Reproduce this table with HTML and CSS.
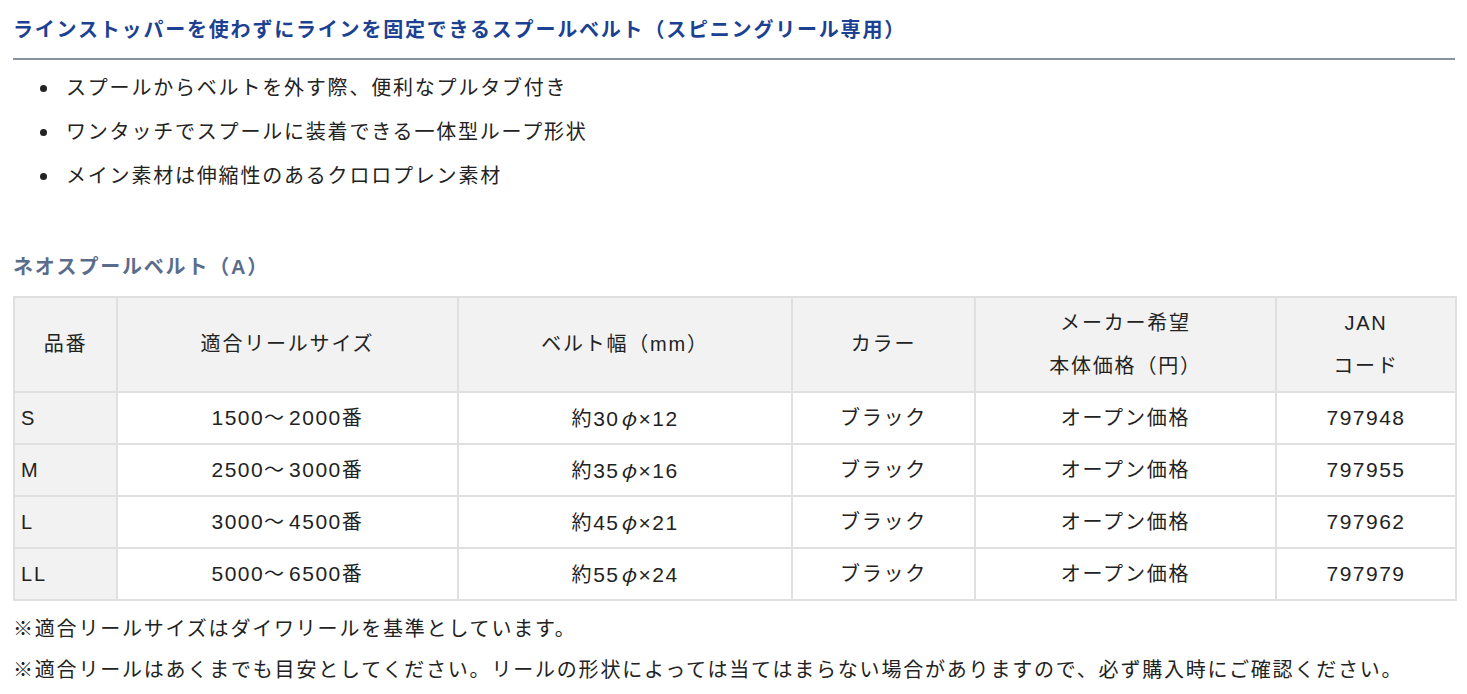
FILE: index.html
```html
<!DOCTYPE html>
<html lang="ja">
<head>
<meta charset="utf-8">
<title>ネオスプールベルト</title>
<link rel="stylesheet" href="styles.css">
</head>
<body>
<div class="page">
  <h2 class="title">ラインストッパーを使わずにラインを固定できるスプールベルト（スピニングリール専用）</h2>
  <ul class="features">
    <li>スプールからベルトを外す際、便利なプルタブ付き</li>
    <li>ワンタッチでスプールに装着できる一体型ループ形状</li>
    <li>メイン素材は伸縮性のあるクロロプレン素材</li>
  </ul>
  <h3 class="subtitle">ネオスプールベルト（A）</h3>
  <table class="spec">
    <colgroup>
      <col class="c1"><col class="c2"><col class="c3"><col class="c4"><col class="c5"><col class="c6">
    </colgroup>
    <thead>
      <tr>
        <th>品番</th>
        <th>適合リールサイズ</th>
        <th>ベルト幅（mm）</th>
        <th>カラー</th>
        <th>メーカー希望<br>本体価格（円）</th>
        <th>JAN<br>コード</th>
      </tr>
    </thead>
    <tbody>
      <tr><th class="code">S</th><td><span class="num">1500</span><span class="wave">〜</span><span class="num">2000</span>番</td><td>約<span class="num">30</span><span class="phi">φ</span><span class="num">×12</span></td><td>ブラック</td><td>オープン価格</td><td><span class="num">797948</span></td></tr>
      <tr><th class="code">M</th><td><span class="num">2500</span><span class="wave">〜</span><span class="num">3000</span>番</td><td>約<span class="num">35</span><span class="phi">φ</span><span class="num">×16</span></td><td>ブラック</td><td>オープン価格</td><td><span class="num">797955</span></td></tr>
      <tr><th class="code">L</th><td><span class="num">3000</span><span class="wave">〜</span><span class="num">4500</span>番</td><td>約<span class="num">45</span><span class="phi">φ</span><span class="num">×21</span></td><td>ブラック</td><td>オープン価格</td><td><span class="num">797962</span></td></tr>
      <tr><th class="code">LL</th><td><span class="num">5000</span><span class="wave">〜</span><span class="num">6500</span>番</td><td>約<span class="num">55</span><span class="phi">φ</span><span class="num">×24</span></td><td>ブラック</td><td>オープン価格</td><td><span class="num">797979</span></td></tr>
    </tbody>
  </table>
  <p class="note">※適合リールサイズはダイワリールを基準としています。</p>
  <p class="note">※適合リールはあくまでも目安としてください。リールの形状によっては当てはまらない場合がありますので、必ず購入時にご確認ください。</p>
</div>
</body>
</html>
```

FILE: styles.css
```css
html, body {
  margin: 0;
  padding: 0;
  background: #ffffff;
}

body {
  font-family: "Liberation Sans", "Noto Sans CJK JP", sans-serif;
  font-size: 20px;
  color: #222222;
  letter-spacing: 0.09em;
}

.page {
  width: 1442px;
  padding: 0 0 0 13px;
}

.title {
  margin: 0;
  padding: 15px 0 13px;
  font-size: 20px;
  line-height: 30px;
  font-weight: 700;
  color: #1c4192;
  letter-spacing: 0.09em;
  border-bottom: 2px solid #8a91a1;
}

.features {
  list-style: none;
  margin: 6px 0 0;
  padding: 0 0 0 27px;
}

.features li {
  display: flex;
  align-items: center;
  line-height: 44px;
  height: 44px;
}

.features li::before {
  content: "";
  flex: none;
  width: 7px;
  height: 7px;
  border-radius: 50%;
  background: #222222;
  margin-right: 19px;
}

.subtitle {
  margin: 54px 0 14px;
  font-size: 20px;
  line-height: 30px;
  font-weight: 700;
  color: #5a6c8c;
  letter-spacing: 0.09em;
}

.spec {
  width: 1442px;
  border-collapse: collapse;
  table-layout: fixed;
  border: 2px solid #e0e0e0;
}

.c1 { width: 103px; }
.c2 { width: 341px; }
.c3 { width: 334px; }
.c4 { width: 183px; }
.c5 { width: 301px; }
.c6 { width: 180px; }

.spec th,
.spec td {
  border: 2px solid #e0e0e0;
  font-weight: 400;
  text-align: center;
  vertical-align: middle;
  height: 50px;
  padding: 0 6px;
  line-height: 36px;
}

.spec thead th {
  background: #f2f2f2;
  height: 93px;
  line-height: 43px;
  padding: 0 6px;
}

.spec th.code {
  background: #f2f2f2;
  text-align: left;
}

.num {
  font-size: 21px;
  letter-spacing: 0.07em;
}

.wave {
  letter-spacing: 0.25em;
}

.phi {
  font-family: "Noto Sans CJK JP", sans-serif;
  font-style: italic;
  padding: 0 1px;
}

.note {
  margin: 0;
  line-height: 41px;
}

.spec + .note {
  margin-top: 8px;
}
```
